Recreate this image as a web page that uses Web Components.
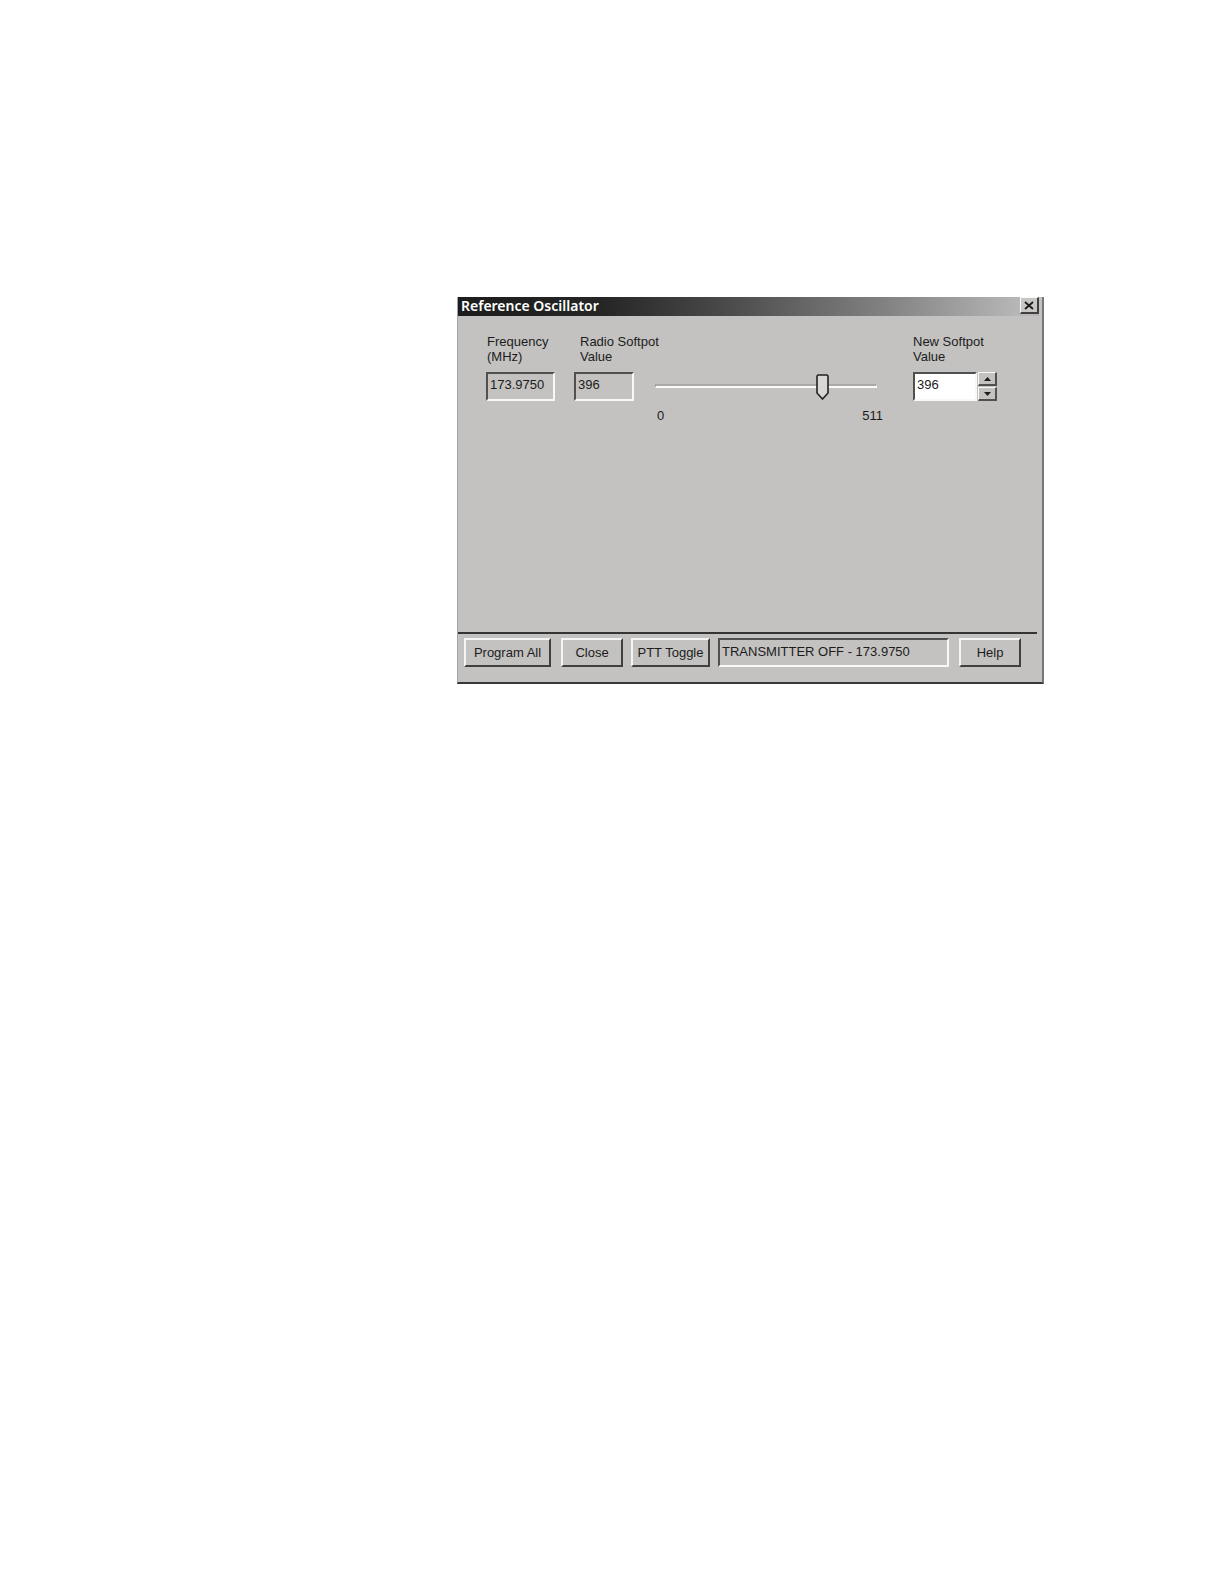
<!DOCTYPE html>
<html lang="en">
<head>
<meta charset="utf-8">
<title>Reference Oscillator</title>
<style>
body { margin: 0; background: #fff; font: 13px/15px "Liberation Sans", Arial, sans-serif; color: #1c1c1c; }
main { padding: 297px 180px 40px 457px; }
</style>
</head>
<body>
<main>
  <dialog-window heading="Reference Oscillator">
    <tuning-row>
      <value-field label="Frequency|(MHz)" value="173.9750" style="--w:69px;--indent:1px"></value-field>
      <value-field label="Radio Softpot|Value" value="396" style="--w:60px;--indent:6px"></value-field>
      <range-slider min="0" max="511" value="396"></range-slider>
      <spin-field label="New Softpot|Value" value="396"></spin-field>
    </tuning-row>
    <push-button slot="actions" style="--w:87px">Program All</push-button>
    <push-button slot="actions" style="--w:62px;--before:10px">Close</push-button>
    <push-button slot="actions" style="--w:79px;--before:8px">PTT Toggle</push-button>
    <status-box slot="actions">TRANSMITTER OFF - 173.9750</status-box>
    <push-button slot="actions" style="--w:62px;--before:10px">Help</push-button>
  </dialog-window>
</main>
<script>
class Base extends HTMLElement {
  connectedCallback() {
    if (this.shadowRoot) return;
    this.attachShadow({ mode: "open" }).innerHTML =
      "<style>*{box-sizing:border-box}:host{display:block;box-sizing:border-box}</style>" + this.view();
    this.ready();
  }
  ready() {}
  get lines() { return this.getAttribute("label").split("|").join("<br>"); }
  attr(name) { return this.getAttribute(name); }
}

const sunken = `
  input{display:block;height:29px;margin:0;padding:0 0 4px 2px;font:inherit;color:inherit;border-radius:0;outline:0;
    border:2px solid;border-color:#505050 #f8f8f8 #f8f8f8 #505050;}
  label{display:block;height:30px;margin-bottom:8px;white-space:nowrap;}`;

customElements.define("dialog-window", class extends Base {
  view() {
    return `<style>
      :host{background:#c3c2c0;border:solid;border-width:0 2px 2px 1px;border-color:#777 #777 #383838 #a5a5a5;}
      header{display:flex;align-items:flex-start;height:19px;margin-right:3px;padding-left:3px;
        background:linear-gradient(90deg,#1c1c1c 0%,#262626 25%,#484848 45%,#858585 75%,#b8b8b8 97%);}
      h1{flex:1;margin:0;font:600 14px/18px "Noto Sans","Open Sans",sans-serif;color:#fff;}
      button{display:grid;place-items:center;width:19px;height:17px;padding:0;background:#c8c7c5;
        border:solid;border-width:1px 2px 2px 1px;border-color:#f8f8f8 #404040 #404040 #f8f8f8;}
      .content{min-height:316px;padding:18px 45px 0 28px;}
      footer{display:flex;margin-right:5px;padding:4px 16px 15px 6px;border-top:2px solid #343434;}
    </style>
    <header><h1>${this.attr("heading")}</h1>
      <button type="button" aria-label="Close window"><svg width="10" height="9" viewBox="0 0 10 9"><path d="M1 1 9 8M9 1 1 8" stroke="#1c1c1c" stroke-width="1.8"/></svg></button>
    </header>
    <div class="content"><slot></slot></div>
    <footer><slot name="actions"></slot></footer>`;
  }
});

customElements.define("tuning-row", class extends Base {
  view() {
    return `<style>:host{display:flex;align-items:flex-start;}
      ::slotted(value-field){margin-right:19px;}</style><slot></slot>`;
  }
});

customElements.define("value-field", class extends Base {
  view() {
    return `<style>${sunken}
      :host{flex:none;width:var(--w);}
      label{padding-left:var(--indent);}
      input{width:100%;background:#c3c2c0;}
    </style><label for="v">${this.lines}</label><input id="v" type="text" readonly value="${this.attr("value")}">`;
  }
});

customElements.define("range-slider", class extends Base {
  view() {
    const thumb = "url(\"data:image/svg+xml,%3Csvg xmlns='http://www.w3.org/2000/svg' width='13' height='26'%3E%3Cpath d='M2 1h9l1 1v17l-5.5 6L1 19V2z' fill='%23d8d7d4' stroke='%23222222' stroke-width='1.6'/%3E%3C/svg%3E\")";
    return `<style>
      :host{flex:1;min-width:0;margin:39px 30px 0 2px;}
      input{display:block;width:calc(100% - 6px);height:26px;margin:0;background:none;-webkit-appearance:none;appearance:none;outline:0;}
      input::-webkit-slider-runnable-track{height:4px;border:solid;border-width:2px 1px 2px 1px;border-color:#aaa9a7 #f8f8f8 #fafafa #999;box-sizing:border-box;}
      input::-webkit-slider-thumb{-webkit-appearance:none;width:13px;height:26px;margin-top:-12px;background:${thumb};border:0;}
      div{display:flex;justify-content:space-between;padding:9px 0 0 2px;}
    </style>
    <input type="range" aria-label="Softpot" min="${this.attr("min")}" max="${this.attr("max")}" value="${this.attr("value")}">
    <div><span>${this.attr("min")}</span><span>${this.attr("max")}</span></div>`;
  }
});

customElements.define("spin-field", class extends Base {
  view() {
    return `<style>${sunken}
      :host{flex:none;width:84px;}
      .row{display:flex;gap:1px;}
      input{flex:1;min-width:0;background:#fff;}
      .spin{display:grid;width:19px;grid-template-rows:14px 14px;gap:1px;}
      button{display:grid;place-items:center;padding:0;background:#c3c2c0;
        border:solid;border-width:1px 2px 2px 1px;border-color:#f8f8f8 #505050 #505050 #f8f8f8;}
    </style>
    <label for="v">${this.lines}</label>
    <div class="row"><input id="v" type="text" inputmode="numeric" value="${this.attr("value")}">
      <div class="spin">
        <button type="button" aria-label="Increase"><svg width="7" height="4"><path d="M0 4 3.5 0 7 4z" fill="#1c1c1c"/></svg></button>
        <button type="button" aria-label="Decrease"><svg width="7" height="4"><path d="M0 0h7L3.5 4z" fill="#1c1c1c"/></svg></button>
      </div></div>`;
  }
  ready() {
    const input = this.shadowRoot.querySelector("input");
    this.shadowRoot.querySelectorAll("button").forEach((b, i) =>
      b.addEventListener("click", () => { input.value = Math.min(511, Math.max(0, +input.value + (i ? -1 : 1))); }));
  }
});

customElements.define("push-button", class extends Base {
  view() {
    return `<style>
      :host{flex:none;width:var(--w);margin-left:var(--before,0px);}
      button{width:100%;height:29px;padding:0;font:inherit;color:inherit;white-space:nowrap;background:#c3c2c0;border-radius:0;
        border:2px solid;border-color:#f4f4f4 #404040 #404040 #f4f4f4;}
    </style><button type="button"><slot></slot></button>`;
  }
});

customElements.define("status-box", class extends Base {
  view() {
    return `<style>
      :host{flex:1;min-width:0;margin-left:8px;}
      output{display:block;height:29px;padding:4px 2px;white-space:nowrap;
        border:2px solid;border-color:#505050 #f8f8f8 #f8f8f8 #505050;}
    </style><output><slot></slot></output>`;
  }
});
</script>
</body>
</html>
